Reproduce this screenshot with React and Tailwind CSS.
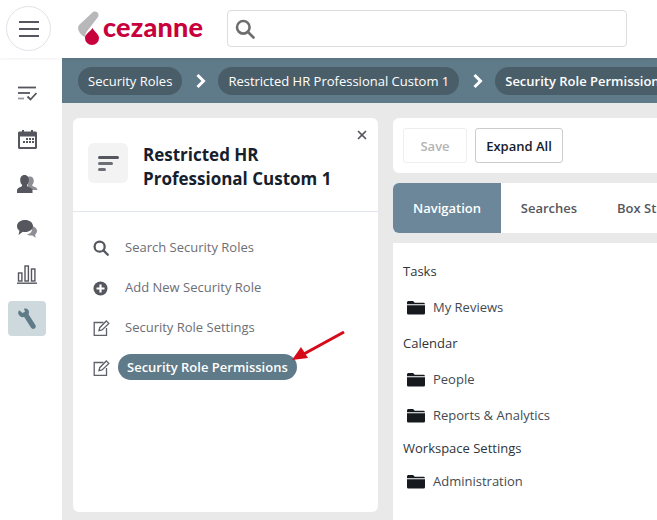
import React from "react";
import { X } from "lucide-react";

const Folder = () => (
  <svg width="18" height="15" viewBox="0 0 18 15" className="shrink-0">
    <path d="M1.5 1h4.6l1.6 1.8h8.8c.8 0 1.5.7 1.5 1.4H0V2.500C0 1.700.7 1 1.500 1z" fill="#16191d" />
    <path d="M0 5.200h18v7.800c0 .9-.7 1.600-1.500 1.600h-15C.7 14.600 0 13.900 0 13z" fill="#16191d" />
  </svg>
);

const Edit = () => (
  <svg width="17" height="16" viewBox="0 0 17 16" fill="none" stroke="#5f6068" strokeWidth="1.300">
    <path d="M10.500 2.500H1.200v12.800h12.300V8" />
    <path d="M6 10.700l.7-3L13.300 1l2.500 2.400-6.700 6.600z" />
  </svg>
);

const Search = ({ size, color, sw }) => (
  <svg width={size} height={size} viewBox="0 0 20 20" fill="none" stroke={color} strokeWidth={sw}>
    <circle cx="8.300" cy="8.300" r="6.300" />
    <path d="M13 13l5.500 5.500" strokeLinecap="round" />
  </svg>
);

const Crumb = ({ children, bold }) => (
  <span className={`h-7 shrink-0 flex items-center rounded-full bg-[#4a5e69] px-[10px] pt-[2px] text-[13px] text-white whitespace-nowrap ${bold ? "font-semibold" : ""}`}>
    {children}
  </span>
);

const Chevron = () => (
  <svg width="12" height="16" viewBox="0 0 12 16" className="shrink-0 ml-[13px] mr-[11px]" fill="none" stroke="#fff" strokeWidth="3">
    <path d="M2.500 2l6 6-6 6" />
  </svg>
);

const SideItem = ({ children, active }) => (
  <div className={`w-[38px] h-[35px] shrink-0 flex items-center justify-center rounded-[4px] ${active ? "bg-[#ced9de]" : ""}`}>
    {children}
  </div>
);

const MenuRow = ({ icon, children }) => (
  <div className="h-10 flex items-center">
    <div className="w-[52px] pl-[20px] shrink-0 flex items-center">{icon}</div>
    <span className="text-[13px] text-[#6d6e76]">{children}</span>
  </div>
);

const Heading = ({ children, className }) => (
  <div className={`text-[13px] leading-[18px] text-[#2f3438] ${className}`}>{children}</div>
);

const FolderRow = ({ children, className }) => (
  <div className={`flex items-center gap-[8px] pl-[4px] text-[13px] leading-[18px] text-[#444a52] ${className}`}>
    <Folder />
    <span>{children}</span>
  </div>
);

export default function App() {
  return (
    <div className="relative w-[657px] h-[520px] overflow-hidden bg-[#e9e9e9] font-['Open_Sans',sans-serif] flex flex-col">
      <header className="h-[58px] shrink-0 bg-white flex items-start pt-[6px] z-10 shadow-[0_1px_3px_rgba(0,0,0,0.06)]">
        <div className="ml-[6px] w-[45px] h-[45px] rounded-full border border-[#dfe3e8] flex items-center justify-center">
          <div className="w-5 flex flex-col gap-[5px]">
            <div className="h-[2px] bg-[#55565e]" />
            <div className="h-[2px] bg-[#55565e]" />
            <div className="h-[2px] bg-[#55565e]" />
          </div>
        </div>
        <div className="ml-[26px] w-[126px] flex items-center mt-[5px]">
          <svg width="24" height="34" viewBox="0 0 24 34" className="shrink-0">
            <path d="M16 1c3-1.500 7 1 5 5L11 19c-1.500 2-3 4-3 7-4-1.500-9-7.500-6-12z" fill="#b8b8ba" />
            <path d="M15.500 17c1.500 3.500 6.500 6 6.500 10a7 7 0 0 1-14 0c0-4 5-6 7.500-10z" fill="#c8003c" />
          </svg>
          <span className="ml-[2px] text-[27px] leading-none font-black font-['Lato',sans-serif] text-[#c8003c] tracking-[0.2px] -mt-[3px]">cezanne</span>
        </div>
        <div className="ml-[24px] mt-[4px] w-[400px] h-[37px] rounded-[4px] border border-[#dddddd] flex items-center pl-[7px]">
          <Search size={20} color="#6e6e70" sw={2.600} />
        </div>
      </header>

      <div className="flex-1 flex min-h-0">
        <aside className="w-[62px] shrink-0 bg-white flex flex-col items-center pt-[18px] gap-[10px] pr-[8px]">
          <SideItem>
            <svg width="19" height="15" viewBox="0 0 19 15" fill="none" strokeWidth="1.800">
              <path d="M0 1.500h18" stroke="#55565e" />
              <path d="M0 7h12" stroke="#55565e" />
              <path d="M0 12.500h6" stroke="#9a9aa0" />
              <path d="M9.500 10.500l3 3 6-6.500" stroke="#55565e" />
            </svg>
          </SideItem>
          <SideItem>
            <svg width="19" height="20" viewBox="0 0 19 20">
              <path fillRule="evenodd" fill="#55565e" d="M1.500 2.500H4V1h2v1.500h7V1h2v1.500h2.500c.8 0 1.500.7 1.500 1.500v14.500c0 .8-.7 1.500-1.500 1.500h-16C.7 20 0 19.300 0 18.500V4c0-.8.7-1.500 1.500-1.500zM2 7.500V18h15V7.500z" />
              <path fill="#55565e" d="M8 9h2v2H8zM11 9h2v2h-2zM14 9h2v2h-2zM5 12h2v2H5zM8 12h2v2H8zM11 12h2v2h-2zM14 12h2v2h-2z" />
            </svg>
          </SideItem>
          <SideItem>
            <svg width="21" height="18" viewBox="0 0 21 18">
              <path fill="#8e8e94" d="M13 1.500c2.500 0 3.800 2 3.800 4.500 0 1.700-.7 3-1.500 3.800v1.200c1.500.7 5.200 1.500 5.200 4H15c-.5-1.500-2-2.500-4-3.200V9C12 7 12 3 10.500 2.500c.5-.7 1.500-1 2.500-1z" />
              <path fill="#55565e" d="M7.500 0c3 0 4.500 2.300 4.500 5.200 0 2-.8 3.500-1.800 4.500v1.500c2 1 5.300 1.700 5.300 4.300V18H0v-2.500c0-2.600 3.300-3.300 5-4.300V9.700C4 8.700 3.200 7.200 3.200 5.200 3.200 2.300 4.500 0 7.500 0z" />
            </svg>
          </SideItem>
          <SideItem>
            <svg width="20" height="18" viewBox="0 0 20 18">
              <path fill="#8e8e94" d="M14 6c3.500.3 6 2.400 6 5 0 1.500-.8 2.800-2 3.700l.8 3-3.600-2.200c-2 .3-4-.2-5.300-1.200 2.300-.2 7-2 4.100-8.300z" />
              <path fill="#55565e" d="M8 0c4.400 0 8 2.600 8 6s-3.600 6-8 6c-.8 0-1.500-.1-2.200-.2L1.500 15l1-4.300C.9 9.600 0 7.900 0 6c0-3.400 3.600-6 8-6z" />
            </svg>
          </SideItem>
          <SideItem>
            <svg width="20" height="20" viewBox="0 0 20 20" fill="none" stroke="#55565e" strokeWidth="1.400">
              <rect x="1.500" y="9" width="3.400" height="8" />
              <rect x="8" y="2" width="3.400" height="15" />
              <rect x="14.500" y="5" width="3.400" height="12" />
              <path d="M0 19.200h20" />
            </svg>
          </SideItem>
          <SideItem active>
            <svg width="18" height="22" viewBox="0 0 18 22">
              <path fill="#5f7a88" d="M1.200 2.200L4.500 5 7 3.800 6 .7C8.500-.3 11 1.500 11 4.200c0 .8-.2 1.400-.5 2l6.700 10.600c.9 1.400.6 3-.6 3.800-1.300.8-2.800.4-3.700-1L6.200 9c-2.800.7-5.600-1-6-3.800-.1-1.100.2-2.100 1-3z" />
            </svg>
          </SideItem>
        </aside>

        <main className="flex-1 min-w-0 flex flex-col">
          <div className="h-[45px] shrink-0 bg-[#5f7a88] flex items-center pl-[16px] pt-[1px] overflow-hidden">
            <Crumb>Security Roles</Crumb>
            <Chevron />
            <Crumb>Restricted HR Professional Custom 1</Crumb>
            <Chevron />
            <Crumb bold>Security Role Permissions</Crumb>
          </div>

          <div className="flex-1 min-h-0 flex pt-[15px] pl-[11px] gap-[15px]">
            <section className="relative w-[305px] h-[394px] shrink-0 bg-white rounded-[6px] flex flex-col">
              <X className="absolute top-[10px] right-[9px] text-[#55565e]" size={14} strokeWidth={3} />
              <div className="h-[94px] shrink-0 border-b border-[#e1e6ee] flex pl-[15px] pt-[25px] gap-[15px]">
                <div className="w-10 h-10 rounded-[6px] bg-[#f3f3f4] flex flex-col justify-center gap-[3px] pl-[10px]">
                  <div className="w-[21px] h-[3px] rounded-full bg-[#55565e]" />
                  <div className="w-[15px] h-[3px] rounded-full bg-[#6d6e76]" />
                  <div className="w-[8px] h-[3px] rounded-full bg-[#6d6e76]" />
                </div>
                <h1 className="text-[17px] leading-[24px] font-bold text-[#16202c]">
                  Restricted HR<br />Professional Custom 1
                </h1>
              </div>
              <div className="pt-[16px]">
                <MenuRow icon={<Search size={16} color="#55565e" sw={2.800} />}>Search Security Roles</MenuRow>
                <MenuRow icon={
                  <svg width="15" height="15" viewBox="0 0 15 15">
                    <circle cx="7.500" cy="7.500" r="7" fill="#55565e" />
                    <path d="M7.500 3.500v8M3.500 7.500h8" stroke="#fff" strokeWidth="2.200" />
                  </svg>
                }>Add New Security Role</MenuRow>
                <MenuRow icon={<Edit />}>Security Role Settings</MenuRow>
                <div className="h-10 flex items-center">
                  <div className="w-[45px] pl-[20px] shrink-0 flex items-center"><Edit /></div>
                  <span className="h-[26px] -mt-[2px] pt-[2px] flex items-center rounded-full bg-[#5f7a88] px-[9px] text-[13px] font-semibold text-white">Security Role Permissions</span>
                </div>
              </div>
            </section>

            <section className="flex-1 min-w-0 flex flex-col">
              <div className="h-[55px] shrink-0 bg-white rounded-l-[6px] flex items-center pl-[10px] gap-[8px]">
                <button className="w-[64px] h-[35px] pt-[2px] rounded-[3px] border border-[#eeeeee] text-[13px] font-semibold text-[#b4b4b4]">Save</button>
                <button className="w-[88px] h-[35px] pt-[2px] rounded-[3px] border border-[#cccccc] text-[13px] font-semibold text-[#16202c]">Expand All</button>
              </div>
              <div className="h-[50px] mt-[10px] pt-[1px] shrink-0 bg-white rounded-l-[6px] flex items-center overflow-hidden">
                <div className="w-[108px] h-[50px] -mt-[1px] shrink-0 bg-[#6b8799] flex items-center justify-center pt-[1px] text-[13px] font-semibold text-white">Navigation</div>
                <div className="w-[96px] shrink-0 text-center text-[13px] font-semibold text-[#55565e]">Searches</div>
                <div className="pl-[20px] w-[60px] shrink-0 overflow-hidden whitespace-nowrap text-[13px] font-semibold text-[#55565e]">Box St</div>
              </div>
              <div className="flex-1 mt-[10px] bg-white pl-[10px] pt-[19px]">
                <Heading>Tasks</Heading>
                <FolderRow className="mt-[18px]">My Reviews</FolderRow>
                <Heading className="mt-[18px]">Calendar</Heading>
                <FolderRow className="mt-[18px]">People</FolderRow>
                <FolderRow className="mt-[18px]">Reports &amp; Analytics</FolderRow>
                <Heading className="mt-[15px]">Workspace Settings</Heading>
                <FolderRow className="mt-[15px]">Administration</FolderRow>
              </div>
            </section>
          </div>
        </main>
      </div>

      <svg className="absolute left-[288px] top-[328px] z-20" width="60" height="40" viewBox="0 0 60 40">
        <path d="M56 4L14 27" stroke="#d60a18" strokeWidth="3" fill="none" />
        <path d="M4 32l9-13 7 11z" fill="#d60a18" />
      </svg>
    </div>
  );
}
